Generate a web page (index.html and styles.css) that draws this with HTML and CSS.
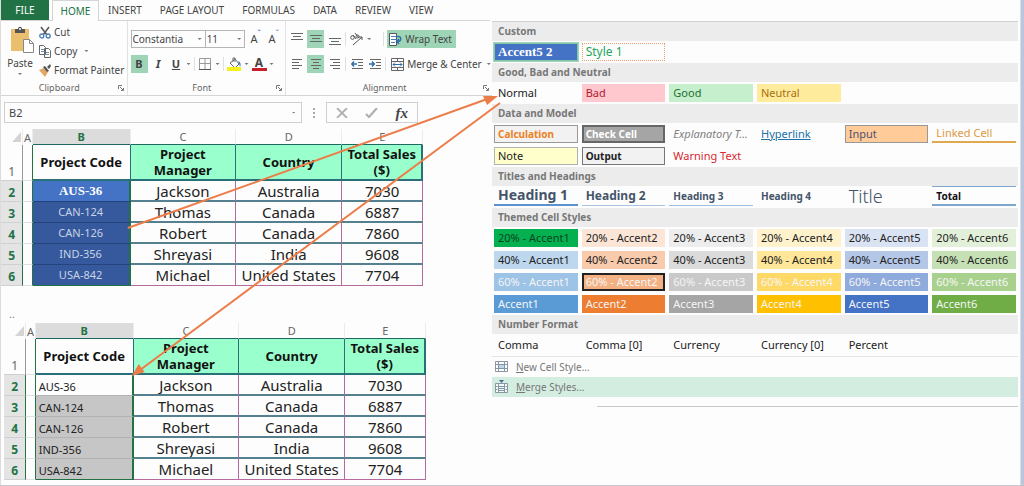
FILE: index.html
```html
<!DOCTYPE html>
<html lang="en">
<head>
<meta charset="utf-8">
<title>Cell Styles</title>
<link rel="stylesheet" href="styles.css">
</head>
<body>
<div class="page">
  <main class="workbook">
    <nav class="tabs">
      <button class="tab tab-file">FILE</button>
      <button class="tab tab-active">HOME</button>
      <button class="tab">INSERT</button>
      <button class="tab">PAGE LAYOUT</button>
      <button class="tab">FORMULAS</button>
      <button class="tab">DATA</button>
      <button class="tab">REVIEW</button>
      <button class="tab">VIEW</button>
    </nav>

    <section class="ribbon">
      <div class="group clipboard">
        <div class="group-body">
          <button class="paste">
            <svg width="28" height="27" viewBox="0 0 28 27"><path fill="#eac06f" d="M5 3h18v22H5z"/><path fill="#555" d="M9 3h3c0-3 4-3 4 0h3v4H9z"/><circle cx="14" cy="3" r="1" fill="#fff"/><path fill="#fff" stroke="#888" d="M17.500 13.500h6l4 4v9h-10z"/><path fill="none" stroke="#888" d="M23.500 13.500v4h4"/></svg>
            <span>Paste</span>
            <i class="caret"></i>
          </button>
          <div class="clip-list">
            <button class="tool">
              <svg width="12" height="13" viewBox="0 0 12 13"><path stroke="#555" stroke-width="1.500" d="M2 1l6 8M10 1L4 9"/><g fill="none" stroke="#4a7eb5" stroke-width="1.300"><circle cx="2.800" cy="10" r="2"/><circle cx="9.200" cy="10" r="2"/></g></svg>
              Cut</button>
            <button class="tool">
              <svg width="12" height="13" viewBox="0 0 12 13"><path fill="#fff" stroke="#666" d="M.5.5h4l2 2v7h-6zM5.500 3.500h4l2 2v7h-6z"/><path stroke="#6f93b5" d="M2 4.500h3M2 6.500h3M7 7.500h3M7 9.500h3"/></svg>
              Copy <i class="caret copy-caret"></i></button>
            <button class="tool">
              <svg width="12" height="13" viewBox="0 0 12 13"><path fill="#e4a662" d="M0 6l5-2 4 4-3 5z"/><path fill="#555" d="M4 3l2-1 4 5-2 1zM8 3l3-3 1 2-2 3z"/></svg>
              Format Painter</button>
          </div>
        </div>
        <div class="group-label"><span>Clipboard</span><svg class="launcher" width="6" height="6" viewBox="0 0 6 6"><path fill="none" stroke="#777" d="M.5 4V.5H4M2 2l3 3M5.500 3v2.500H3"/></svg></div>
      </div>

      <div class="group font">
        <div class="group-body rows">
          <div class="row">
            <label class="combo combo-name"><select aria-label="Font"><option>Constantia</option></select></label>
            <label class="combo combo-size"><select aria-label="Font size"><option>11</option></select></label>
            <button class="glyph grow">A<sup>ˆ</sup></button>
            <button class="glyph grow">A<sup>ˇ</sup></button>
          </div>
          <div class="row">
            <button class="glyph on"><b>B</b></button>
            <button class="glyph"><b><em>I</em></b></button>
            <button class="glyph"><b><u>U</u></b></button>
            <i class="caret"></i>
            <i class="sep"></i>
            <button class="glyph" aria-label="Borders"><svg width="12" height="12" viewBox="0 0 12 12"><path fill="none" stroke="#999" d="M.5 11V.5h11V11M6 0v11M0 5.500h12"/><path stroke="#555" d="M0 11.500h12"/></svg></button>
            <i class="caret"></i>
            <i class="sep"></i>
            <button class="glyph" aria-label="Fill color"><svg width="15" height="14" viewBox="0 0 15 14"><path fill="#fff" stroke="#666" d="M3 6l5-4 4 5-4 4z"/><path fill="none" stroke="#666" d="M6 5V1h2v4"/><path fill="#2f6fa8" d="M11 4c3 1 3 4 2 6l-1-4z"/><path fill="#f7f01e" d="M0 10h14v4H0z"/></svg></button>
            <i class="caret"></i>
            <button class="glyph font-color"><b>A</b></button>
            <i class="caret"></i>
          </div>
        </div>
        <div class="group-label"><span>Font</span><svg class="launcher" width="6" height="6" viewBox="0 0 6 6"><path fill="none" stroke="#777" d="M.5 4V.5H4M2 2l3 3M5.500 3v2.500H3"/></svg></div>
      </div>

      <div class="group alignment">
        <div class="group-body rows">
          <div class="row">
            <button class="glyph" aria-label="Top align"><svg width="12" height="14" viewBox="0 0 12 14"><path stroke="#666" d="M0 1.500h12M2 4.500h8M0 7.500h12"/></svg></button>
            <button class="glyph on" aria-label="Middle align"><svg width="12" height="14" viewBox="0 0 12 14"><path stroke="#666" d="M0 3.500h12M2 6.500h8M0 9.500h12"/></svg></button>
            <button class="glyph" aria-label="Bottom align"><svg width="12" height="14" viewBox="0 0 12 14"><path stroke="#666" d="M0 6.500h12M2 9.500h8M0 12.500h12"/></svg></button>
            <i class="sep"></i>
            <button class="glyph" aria-label="Orientation"><svg width="13" height="13" viewBox="0 0 13 13"><g fill="none" stroke="#555"><circle cx="2.500" cy="4.500" r="1.800"/><path d="M3 2l3 4M5 0l4 5"/><circle cx="7.500" cy="3.500" r="1.500"/><path d="M3 12l9-8M12 7V4H9"/></g></svg></button>
            <i class="caret"></i>
            <i class="sep push"></i>
            <button class="wide on"><svg width="13" height="13" viewBox="0 0 13 13"><path fill="#fff" stroke="#555" d="M.5.5h7v12h-7z"/><path stroke="#4a7eb5" d="M2 3.500h7M2 6.500h6M2 9.500h4"/><path fill="none" stroke="#2f6fa8" stroke-width="1.500" d="M8 3.500c5-1 5 5 0 5M10 6L7.500 8.500 10 11"/></svg>Wrap Text</button>
          </div>
          <div class="row">
            <button class="glyph" aria-label="Align left"><svg width="10" height="10" viewBox="0 0 10 10"><path stroke="#666" d="M0 .5h10M0 3.500h7M0 6.500h10M0 9.500h7"/></svg></button>
            <button class="glyph on" aria-label="Center"><svg width="10" height="10" viewBox="0 0 10 10"><path stroke="#666" d="M0 .5h10M2 3.500h6M0 6.500h10M2 9.500h6"/></svg></button>
            <button class="glyph" aria-label="Align right"><svg width="10" height="10" viewBox="0 0 10 10"><path stroke="#666" d="M0 .5h10M3 3.500h7M0 6.500h10M3 9.500h7"/></svg></button>
            <i class="sep"></i>
            <button class="glyph" aria-label="Decrease indent"><svg width="12" height="10" viewBox="0 0 12 10"><path stroke="#666" d="M1 .5h11M7 3.500h5M7 6.500h5M1 9.500h11"/><path fill="none" stroke="#2f6fa8" stroke-width="1.500" d="M6 5H1M3 2.500L.8 5 3 7.500"/></svg></button>
            <button class="glyph" aria-label="Increase indent"><svg width="12" height="10" viewBox="0 0 12 10"><path stroke="#666" d="M1 .5h11M7 3.500h5M7 6.500h5M1 9.500h11"/><path fill="none" stroke="#2f6fa8" stroke-width="1.500" d="M0 5h5M3 2.500L5.200 5 3 7.500"/></svg></button>
            <i class="sep push"></i>
            <button class="wide"><svg width="13" height="13" viewBox="0 0 13 13"><path fill="#fff" stroke="#666" d="M.5.5h12v12H.5zM.5 3.500h12M.5 9.500h12M6.500.5v3M6.500 9.500v3"/><path fill="none" stroke="#2f6fa8" d="M2 6.500h9M4 4.500l-2 2 2 2M9 4.500l2 2-2 2"/></svg>Merge &amp; Center</button>
            <i class="caret"></i>
          </div>
        </div>
        <div class="group-label"><span>Alignment</span><svg class="launcher" width="6" height="6" viewBox="0 0 6 6"><path fill="none" stroke="#777" d="M.5 4V.5H4M2 2l3 3M5.500 3v2.500H3"/></svg></div>
      </div>
    </section>

    <section class="formula-bar">
      <label class="name-box"><input type="text" value="B2" aria-label="Name box"><i class="caret"></i></label>
      <svg class="grip" width="2" height="10" viewBox="0 0 2 10"><path fill="#aaa" d="M0 0h2v2H0zM0 4h2v2H0zM0 8h2v2H0z"/></svg>
      <div class="formula-tools">
        <button class="glyph" aria-label="Cancel"><svg width="12" height="10" viewBox="0 0 12 10"><path stroke="#b0b0b0" stroke-width="1.800" d="M1 0l10 10M11 0L1 10"/></svg></button>
        <button class="glyph" aria-label="Enter"><svg width="13" height="10" viewBox="0 0 13 10"><path fill="none" stroke="#b0b0b0" stroke-width="2.200" d="M1 6l3 3 8-9"/></svg></button>
        <button class="glyph fx">fx</button>
      </div>
    </section>

    <table class="sheet sheet-first">
      <colgroup><col class="c-num"><col class="c-a"><col class="c-b"><col class="c-c"><col class="c-d"><col class="c-e"></colgroup>
      <thead><tr><th class="corner"><svg width="9" height="10" viewBox="0 0 9 10"><path fill="#d4d4d4" d="M9 0v10H0z"/></svg></th><th>A</th><th class="picked">B</th><th>C</th><th>D</th><th>E</th></tr></thead>
      <tbody>
        <tr class="titles"><th>1</th><td></td><td class="code">Project Code</td><td>Project Manager</td><td>Country</td><td>Total Sales ($)</td></tr>
        <tr><th>2</th><td></td><td class="code accent">AUS-36</td><td>Jackson</td><td>Australia</td><td>7030</td></tr>
        <tr><th>3</th><td></td><td class="code">CAN-124</td><td>Thomas</td><td>Canada</td><td>6887</td></tr>
        <tr><th>4</th><td></td><td class="code">CAN-126</td><td>Robert</td><td>Canada</td><td>7860</td></tr>
        <tr><th>5</th><td></td><td class="code">IND-356</td><td>Shreyasi</td><td>India</td><td>9608</td></tr>
        <tr><th>6</th><td></td><td class="code">USA-842</td><td>Michael</td><td>United States</td><td>7704</td></tr>
      </tbody>
    </table>

    <div class="dots">..</div>

    <table class="sheet sheet-second">
      <colgroup><col class="c-num"><col class="c-a"><col class="c-b"><col class="c-c"><col class="c-d"><col class="c-e"></colgroup>
      <thead><tr><th class="corner"><svg width="9" height="10" viewBox="0 0 9 10"><path fill="#d4d4d4" d="M9 0v10H0z"/></svg></th><th>A</th><th class="picked">B</th><th>C</th><th>D</th><th>E</th></tr></thead>
      <tbody>
        <tr class="titles"><th>1</th><td></td><td class="code">Project Code</td><td>Project Manager</td><td>Country</td><td>Total Sales ($)</td></tr>
        <tr><th>2</th><td></td><td class="code active">AUS-36</td><td>Jackson</td><td>Australia</td><td>7030</td></tr>
        <tr><th>3</th><td></td><td class="code">CAN-124</td><td>Thomas</td><td>Canada</td><td>6887</td></tr>
        <tr><th>4</th><td></td><td class="code">CAN-126</td><td>Robert</td><td>Canada</td><td>7860</td></tr>
        <tr><th>5</th><td></td><td class="code">IND-356</td><td>Shreyasi</td><td>India</td><td>9608</td></tr>
        <tr><th>6</th><td></td><td class="code">USA-842</td><td>Michael</td><td>United States</td><td>7704</td></tr>
      </tbody>
    </table>

    <svg class="arrows" viewBox="0 0 492 486" preserveAspectRatio="none" aria-hidden="true">
      <g stroke="#ec7d49" stroke-width="2" fill="none"><path d="M127 228L490 98M500 103L138 371"/></g>
      <path fill="#ec7d49" d="M498 96l-15 0 4 9zM131 376l7-12 6 8z"/>
    </svg>
  </main>

  <aside class="gallery">
    <h2>Custom</h2>
    <div class="tiles">
      <button class="tile custom-accent">Accent5 2</button>
      <button class="tile custom-style">Style 1</button>
    </div>
    <h2>Good, Bad and Neutral</h2>
    <div class="tiles">
      <button class="tile">Normal</button>
      <button class="tile bad">Bad</button>
      <button class="tile good">Good</button>
      <button class="tile neutral">Neutral</button>
    </div>
    <h2>Data and Model</h2>
    <div class="tiles">
      <button class="tile calculation">Calculation</button>
      <button class="tile check">Check Cell</button>
      <button class="tile explanatory">Explanatory T...</button>
      <button class="tile hyperlink">Hyperlink</button>
      <button class="tile input">Input</button>
      <button class="tile linked">Linked Cell</button>
      <button class="tile note">Note</button>
      <button class="tile output">Output</button>
      <button class="tile warning">Warning Text</button>
    </div>
    <h2>Titles and Headings</h2>
    <div class="tiles headings">
      <button class="tile heading1">Heading 1</button>
      <button class="tile heading2">Heading 2</button>
      <button class="tile heading3">Heading 3</button>
      <button class="tile heading4">Heading 4</button>
      <button class="tile title">Title</button>
      <button class="tile total">Total</button>
    </div>
    <h2>Themed Cell Styles</h2>
    <div class="tiles">
      <button class="tile a1-20">20% - Accent1</button>
      <button class="tile a2-20">20% - Accent2</button>
      <button class="tile a3-20">20% - Accent3</button>
      <button class="tile a4-20">20% - Accent4</button>
      <button class="tile a5-20">20% - Accent5</button>
      <button class="tile a6-20">20% - Accent6</button>
      <button class="tile a1-40">40% - Accent1</button>
      <button class="tile a2-40">40% - Accent2</button>
      <button class="tile a3-40">40% - Accent3</button>
      <button class="tile a4-40">40% - Accent4</button>
      <button class="tile a5-40">40% - Accent5</button>
      <button class="tile a6-40">40% - Accent6</button>
      <button class="tile light a1-60">60% - Accent1</button>
      <button class="tile light a2-60">60% - Accent2</button>
      <button class="tile light a3-60">60% - Accent3</button>
      <button class="tile light a4-60">60% - Accent4</button>
      <button class="tile light a5-60">60% - Accent5</button>
      <button class="tile light a6-60">60% - Accent6</button>
      <button class="tile light a1">Accent1</button>
      <button class="tile light a2">Accent2</button>
      <button class="tile light a3">Accent3</button>
      <button class="tile light a4">Accent4</button>
      <button class="tile light a5">Accent5</button>
      <button class="tile light a6">Accent6</button>
    </div>
    <h2>Number Format</h2>
    <div class="tiles numbers">
      <button class="tile">Comma</button>
      <button class="tile">Comma [0]</button>
      <button class="tile">Currency</button>
      <button class="tile">Currency [0]</button>
      <button class="tile">Percent</button>
    </div>
    <button class="command">
      <svg width="13" height="14" viewBox="0 0 13 14"><path fill="#fff" stroke="#8a97a3" d="M.5 1.500h12v10H.5zM.5 4.500h12M.5 8.500h12M3.500 1.500v10M9.500 1.500v10"/><path fill="#c2d5e4" stroke="#7896ad" d="M3.500 4.500h6v4h-6z"/></svg>
      <span><u>N</u>ew Cell Style...</span></button>
    <button class="command hovered">
      <svg width="13" height="14" viewBox="0 0 13 14"><path fill="#f4faf7" stroke="#8a97a3" d="M.5 3.500h12v9H.5zM.5 6.500h2M.5 9.500h2M10.500 6.500h2M10.500 9.500h2M3.500 3.500v9M9.500 3.500v9"/><path stroke="#7896ad" d="M4 6.500h5M4 8.500h5M4 10.500h5"/><path fill="#456f8f" d="M4 0h5L6.500 3z"/></svg>
      <span><u>M</u>erge Styles...</span></button>
    <hr>
  </aside>
  <div class="edge"></div>
</div>
</body>
</html>
```

FILE: styles.css
```css
* { box-sizing: border-box; }
body {
  margin: 0;
  background: #fdfdfd;
  color: #444;
  font: 11px/16px "Noto Sans", "Open Sans", sans-serif;
}
button, select, input {
  margin: 0;
  padding: 0;
  border: 0;
  border-radius: 0;
  background: none;
  color: inherit;
  font: inherit;
}
svg { display: block; flex: none; }
.page {
  display: grid;
  grid-template-columns: 492fr 528fr 4px;
  min-height: 100vh;
  border-bottom: 1px solid #c4c6ca;
}
.workbook { position: relative; border-left: 1px solid #dcdcdc; min-width: 0; }
.edge { background: #bac5de; border-left: 1px solid #d8deea; }

/* Ribbon */
.tabs { display: flex; height: 21px; border-bottom: 1px solid #d5d5d5; margin-right: 2px; font-size: 10px; }
.tab { padding: 0 9px; white-space: nowrap; }
.tab-file { width: 48px; background: #217346; color: #fff; padding: 0; margin-right: 3px; }
.tab-active {
  height: 21px;
  width: 47px;
  padding: 0;
  border: 1px solid #d5d5d5;
  border-bottom: 0;
  background: #fdfdfd;
  color: #217346;
}
.ribbon {
  display: grid;
  grid-template-columns: 125fr 158fr 206fr;
  height: 75px;
  border-bottom: 1px solid #d5d5d5;
  font-size: 10px;
}
.group { display: flex; flex-direction: column; position: relative; padding: 3px 0 0; min-width: 0; }
.group + .group { border-left: 1px solid #e2e2e2; }
.group-body { display: flex; flex: 1; }
.group-label { display: flex; align-items: center; justify-content: center; height: 14px; font-size: 9px; color: #666; }
.group-label span { flex: 1; text-align: center; }
.launcher { margin-right: 3px; }
.caret { flex: none; width: 4px; height: 2px; background: #777; clip-path: polygon(0 0, 100% 0, 50% 100%); }
.paste { display: flex; flex-direction: column; align-items: center; width: 38px; gap: 2px; padding-top: 2px; }
.clip-list { display: flex; flex-direction: column; gap: 3px; }
.tool { display: flex; align-items: center; gap: 3px; height: 16px; white-space: nowrap; }
.copy-caret { margin-left: 4px; }
.rows { flex-direction: column; gap: 7px; padding: 6px 4px 0 3px; }
.row { display: flex; align-items: center; height: 18px; gap: 3px; }
.glyph { display: flex; align-items: center; justify-content: center; flex: none; min-width: 15px; height: 18px; font-size: 11px; }
.on { background: #9fd5b7; min-width: 17px; }
.sep { flex: none; width: 1px; height: 14px; background: #e0e0e0; }
.push { margin-left: auto; }
.combo { position: relative; height: 18px; border: 1px solid #b5b5b5; }
.combo + .combo { margin-left: -4px; }
.combo::after {
  content: "";
  position: absolute;
  right: 3px;
  top: 7px;
  width: 4px;
  height: 2px;
  background: #777;
  clip-path: polygon(0 0, 100% 0, 50% 100%);
}
.combo select { appearance: none; width: 100%; height: 16px; padding-left: 1px; }
.combo-name { width: 76px; }
.combo-size { width: 41px; }
.grow sup { font-size: 8px; line-height: 8px; align-self: flex-start; color: #2f6fa8; }
.font-color { height: 14px; border-bottom: 3px solid #c8202a; font-size: 12px; line-height: 12px; }
.wide { display: flex; align-items: center; gap: 3px; height: 18px; padding: 0 2px; white-space: nowrap; }
.wide.on { padding-right: 4px; margin-right: 32px; }

/* Formula bar */
.formula-bar { display: flex; align-items: center; gap: 11px; padding: 6px 0 6px 3px; }
.name-box { display: flex; align-items: center; width: 61%; height: 21px; border: 1px solid #d0d0d0; padding: 0 5px 0 4px; }
.name-box input { flex: 1; min-width: 0; }
.formula-tools { display: flex; justify-content: space-around; align-items: center; width: 92px; height: 21px; border: 1px solid #d0d0d0; }
.fx { font: italic bold 15px/18px "Liberation Serif", serif; }

/* Worksheets */
.sheet { table-layout: fixed; border-collapse: separate; border-spacing: 0; width: 86%; line-height: 16px; }
.c-num { width: 5.300%; }
.c-a { width: 2.200%; }
.c-b { width: 23.200%; }
.c-c { width: 25%; }
.c-d { width: 25.100%; }
.c-e { width: 19.200%; }
.sheet-second { margin-left: 3px; }
.sheet th, .sheet td { padding: 0; text-align: center; white-space: nowrap; overflow: hidden; }
.sheet thead th { height: 16px; font-weight: 400; color: #666; border-right: 1px solid #ececec; line-height: 15px; }
.sheet thead th:nth-child(n+3) { border-bottom: 1px solid #1e6a62; }
.sheet thead .picked { background: #dcdcdc; color: #217346; font-weight: 700; }
.corner svg { margin: 0 1px 0 auto; }
.sheet tbody th { height: 21px; border-right: 1px solid #217346; border-bottom: 1px solid #d0d0d0; background: #e4e4e4; color: #217346; font-size: 12px; vertical-align: bottom; }
.sheet tbody td { height: 21px; border-right: 1px solid #b56aa0; border-bottom: 2px solid #55808f; color: #222; font-size: 15px; }
.sheet tbody td:nth-child(2) { border-right: 1px solid #217346; border-bottom: 1px solid #e0e0e0; }
.sheet tbody tr:last-child td:nth-child(n+4) { border-bottom: 1px solid #b56aa0; }
.sheet .titles th { height: 36px; background: none; color: #666; font-weight: 400; border-right-color: #999; }
.sheet .titles td { height: 36px; font-size: 13px; font-weight: 700; color: #111; white-space: normal; border-color: #2a7078; background: #99ffcc; }
.sheet .titles td:nth-child(2) { background: none; }
.sheet .titles .code { background: #fdfdfd; }
.sheet .titles td:last-child { border-right-width: 2px; }
.sheet tbody tr:not(.titles) .code { font-size: 11px; border-right: 2px solid #217346; }
.sheet-first tbody tr:not(.titles) .code { background: #35599c; color: #c8d2e6; border-bottom: 1px solid #26447c; }
.sheet-first tbody tr:not(.titles) .accent { background: #4472c4; color: #fff; font: bold 13px/16px "Liberation Serif", serif; }
.sheet-second tbody tr:not(.titles) .code { background: #c6c6c6; text-align: left; padding: 3px 0 0 3px; border-bottom: 1px solid #b2b2b2; }
.sheet-second tbody tr:not(.titles) .active { background: #fdfdfd; }
.sheet tbody tr:last-child .code { border-bottom: 1px solid #217346; }
.dots { height: 37px; padding: 20px 0 0 8px; color: #888; }
.arrows { position: absolute; left: 0; top: 0; width: 100%; height: 486px; overflow: visible; pointer-events: none; }

/* Style gallery */
.gallery { padding: 21px 2px 0 0; min-width: 0; }
.gallery h2 { margin: 0; padding: 0 6px; height: 19px; font-size: 10px; line-height: 19px; font-weight: 700; color: #777; background: #ececec; }
.gallery h2:first-child { border-top: 1px solid #d0d0d0; height: 20px; }
.tiles { display: grid; grid-template-columns: repeat(6, minmax(0, 1fr)); gap: 4px; padding: 2px; }
.tile { height: 18px; padding: 0 4px; border: 0 solid transparent; text-align: left; line-height: 16px; color: #222; white-space: nowrap; }
.custom-accent { background: #4472c4; border: 1px solid #83c7a5; outline: 1px solid #9fd5b7; color: #fff; padding: 0 3px; font: bold 13px/14px "Liberation Serif", serif; }
.custom-style { border: 1px dotted #e8a070; color: #23a55a; padding: 0 3px; font-size: 12px; }
.bad { background: #ffc7ce; color: #b02030; }
.good { background: #c6efce; color: #207030; }
.neutral { background: #ffeb9c; color: #a87010; }
.calculation { background: #f2f2f2; border: 1px solid #999; color: #ed8020; font-size: 10px; font-weight: 700; padding: 0 3px; }
.check { background: #a5a5a5; border: 2px solid #666; color: #fff; font-size: 10px; font-weight: 700; padding: 0 2px; line-height: 14px; }
.explanatory { color: #808080; font-style: italic; }
.hyperlink { color: #2070a8; text-decoration: underline; }
.input { background: #ffcc99; border: 1px solid #999; color: #4f5070; padding: 0 3px; }
.linked { color: #dc9a3c; border-bottom: 2px solid #e0a850; }
.note { background: #ffffcc; border: 1px solid #b2b2b2; padding: 0 3px; }
.output { background: #f2f2f2; border: 1px solid #777; font-size: 10px; font-weight: 700; padding: 0 3px; }
.warning { color: #d82830; }
.headings { padding: 0 2px 2px; }
.headings .tile { height: 20px; font-size: 10px; font-weight: 700; color: #44546a; line-height: 18px; }
.headings .heading1 { font-size: 14px; border-bottom: 2px solid #5b93d0; }
.headings .heading2 { font-size: 12px; border-bottom: 1px solid #a8c4e4; }
.headings .heading3 { border-bottom: 1px solid #9dbfe2; }
.headings .title { font-size: 18px; font-weight: 300; }
.headings .total { color: #111; border-top: 1px solid #7fa6cc; border-bottom: 2px solid #7fa6cc; }
.tiles .light { color: #f5f5f5; }
.a1-20 { background: #05b050; color: #0b4520; }
.a2-20 { background: #fbe5d6; }
.a3-20 { background: #ededed; }
.a4-20 { background: #fff2cc; }
.a5-20 { background: #dae3f3; }
.a6-20 { background: #e2f0d9; }
.a1-40 { background: #bdd7ee; }
.a2-40 { background: #f8cbad; }
.a3-40 { background: #dbdbdb; }
.a4-40 { background: #ffe699; }
.a5-40 { background: #b4c7e7; }
.a6-40 { background: #c5e0b4; }
.a1-60 { background: #9dc3e6; }
.a2-60 { background: #f4b183; border: 2px solid #222; padding: 0 2px; line-height: 14px; }
.a3-60 { background: #c9c9c9; }
.a4-60 { background: #ffd966; }
.a5-60 { background: #8faadc; }
.a6-60 { background: #a9d18e; }
.a1 { background: #5b9bd5; }
.a2 { background: #ed7d31; }
.a3 { background: #a5a5a5; }
.a4 { background: #ffc000; }
.a5 { background: #4472c4; }
.a6 { background: #70ad47; }
.numbers { border-bottom: 1px solid #e4e4e4; }
.command { display: flex; align-items: center; gap: 8px; width: 100%; height: 20px; padding: 0 3px; color: #777; font-size: 10px; }
.hovered { background: #d3ede1; }
hr { margin: 9px 0 0 20%; border: 0; border-top: 1px solid #c8c8c8; }
```
